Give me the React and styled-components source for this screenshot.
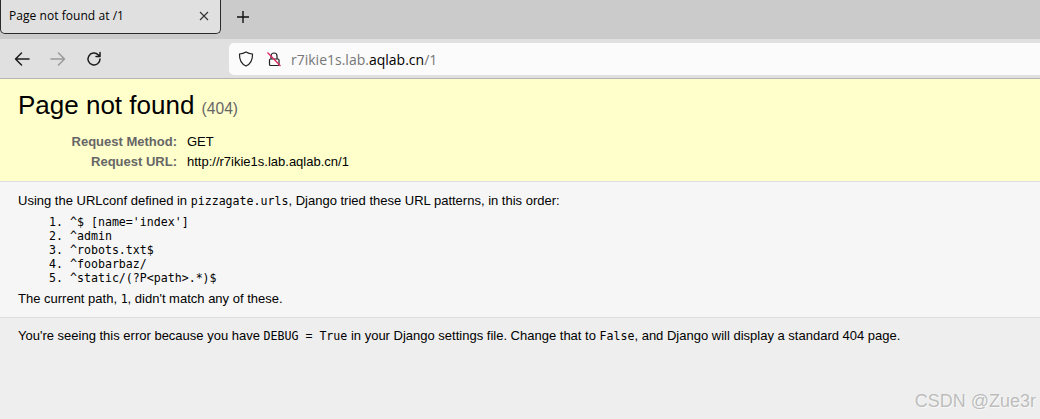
import React from 'react'
import styled, { createGlobalStyle } from 'styled-components'

const GlobalStyle = createGlobalStyle`
  html, body { margin: 0; padding: 0; height: 100%; overflow: hidden; }
  body { font-family: "Liberation Sans", Arial, sans-serif; color: #000; background: #eee; }
  #root { height: 100%; }
`

const Window = styled.div`
  position: relative;
  display: flex;
  flex-direction: column;
  width: 1040px;
  height: 419px;
  overflow: hidden;
`

const TabBar = styled.div`
  display: flex;
  align-items: flex-start;
  height: 39px;
  flex: none;
  background: #cbcbcb;
`

const Tab = styled.div`
  display: flex;
  align-items: center;
  justify-content: space-between;
  box-sizing: border-box;
  width: 221px;
  height: 34px;
  padding: 0 11px 2px 8px;
  background: #e0e0e0;
  border: 1px solid #2a2a2a;
  border-top: none;
  border-radius: 0 0 5px 5px;
  font-family: "Open Sans", sans-serif;
  font-size: 12px;
  letter-spacing: 0.05px;
`

const NewTab = styled.button`
  display: flex;
  align-items: center;
  justify-content: center;
  width: 20px;
  height: 34px;
  margin-left: 12px;
  padding: 0;
  border: none;
  background: none;
`

const Toolbar = styled.div`
  display: flex;
  align-items: center;
  height: 40px;
  flex: none;
  box-sizing: border-box;
  padding: 1px 0 0 14px;
  background: #e0e0e0;
  border-bottom: 1px solid #b4b4b4;
`

const NavButton = styled.span`
  display: flex;
  width: 16px;
  height: 16px;
  margin-right: 20px;
  color: ${(p) => (p.$disabled ? '#9a9a9a' : '#1c1c1c')};
`

const UrlBar = styled.div`
  display: flex;
  align-items: center;
  flex: 1;
  height: 32px;
  margin-left: 107px;
  padding-left: 9px;
  background: #fbfbfb;
  border-radius: 5px 0 0 5px;
  font-family: "Open Sans", sans-serif;
  font-size: 14px;
  color: #777;
`

const UrlIcon = styled.span`
  display: flex;
  width: 16px;
  height: 18px;
  margin-right: ${(p) => p.$gap}px;
`

const Host = styled.span`
  color: #000;
`

const Page = styled.main`
  flex: 1;
  display: flex;
  flex-direction: column;
  font-size: 13px;
  line-height: 14px;
`

const Summary = styled.section`
  box-sizing: border-box;
  height: 103px;
  padding: 9px 18px 0;
  background: #ffc;
  border-bottom: 1px solid #ddd;
`

const Title = styled.h1`
  margin: 0 0 9px;
  font-size: 26px;
  line-height: 35px;
  font-weight: 400;
`

const Status = styled.span`
  font-size: 15.6px;
  color: #666;
`

const Meta = styled.div`
  display: grid;
  grid-template-columns: 159px auto;
  column-gap: 10px;
  row-gap: 6px;
`

const MetaLabel = styled.div`
  text-align: right;
  font-weight: 700;
  color: #666;
`

const Info = styled.section`
  box-sizing: border-box;
  height: 136px;
  padding: 12px 18px 0;
  background: #f6f6f6;
  border-bottom: 1px solid #ddd;
`

const Para = styled.p`
  margin: 0;
`

const Mono = styled.code`
  font-family: "DejaVu Sans Mono", monospace;
  font-size: 11.6px;
`

const Patterns = styled.ol`
  margin: 7px 0 7px;
  padding: 0 0 0 52px;
  font-family: "DejaVu Sans Mono", monospace;
  font-size: 11.6px;
  line-height: 14px;
`

const Explanation = styled.section`
  flex: 1;
  padding: 11px 18px 0;
  background: #eee;
`

const Watermark = styled.div`
  position: absolute;
  right: 4px;
  bottom: 7px;
  font-size: 18px;
  line-height: 21px;
  color: rgba(120, 120, 120, 0.45);
  text-shadow: 1px 1px 1px rgba(255, 255, 255, 0.6);
`

const patterns = [
  "^$ [name='index']",
  '^admin',
  '^robots.txt$',
  '^foobarbaz/',
  '^static/(?P<path>.*)$',
]

const strokeProps = {
  fill: 'none',
  stroke: 'currentColor',
  strokeLinecap: 'round',
  strokeLinejoin: 'round',
}

export default function App() {
  return (
    <Window>
      <GlobalStyle />
      <TabBar>
        <Tab>
          <span>Page not found at /1</span>
          <svg width="10" height="10" viewBox="0 0 10 10" stroke="#333" strokeWidth="1.1">
            <path d="M1 1l8 8M9 1l-8 8" />
          </svg>
        </Tab>
        <NewTab aria-label="New tab">
          <svg width="14" height="14" viewBox="0 0 14 14" stroke="#111" strokeWidth="1.4">
            <path d="M7 1v12M1 7h12" />
          </svg>
        </NewTab>
      </TabBar>
      <Toolbar>
        <NavButton>
          <svg width="16" height="16" viewBox="0 0 16 16" {...strokeProps} strokeWidth="1.5">
            <path d="M15 8H1.500M7.500 2L1.500 8l6 6" />
          </svg>
        </NavButton>
        <NavButton $disabled>
          <svg width="16" height="16" viewBox="0 0 16 16" {...strokeProps} strokeWidth="1.5">
            <path d="M1 8h13.500M8.500 2l6 6-6 6" />
          </svg>
        </NavButton>
        <NavButton>
          <svg width="16" height="16" viewBox="0 0 16 16" {...strokeProps} strokeWidth="1.5">
            <path d="M14 8a6 6 0 1 1-1.800-4.300L14 5.500M14 1.500v4h-4" />
          </svg>
        </NavButton>
        <UrlBar>
          <UrlIcon $gap={12}>
            <svg width="16" height="18" viewBox="0 0 16 18" fill="none" stroke="#222" strokeWidth="1.2">
              <path d="M8 2c2 1.200 4 1.800 6.500 2 .2 5.500-1.500 9.800-6.500 12C3 13.800 1.300 9.500 1.500 4 4 3.800 6 3.200 8 2z" />
            </svg>
          </UrlIcon>
          <UrlIcon $gap={9}>
            <svg width="16" height="18" viewBox="0 0 16 18" fill="none" strokeWidth="1.2">
              <path d="M5 9V6a3 3 0 0 1 6 0v3M4.500 9h7.500a1 1 0 0 1 1 1v4.500a1 1 0 0 1-1 1H4.500a1 1 0 0 1-1-1V10a1 1 0 0 1 1-1z" stroke="#222" strokeLinejoin="round" />
              <path d="M1.500 2.500L14.500 16" stroke="#e0245e" />
            </svg>
          </UrlIcon>
          <span>r7ikie1s.lab.<Host>aqlab.cn</Host>/1</span>
        </UrlBar>
      </Toolbar>
      <Page>
        <Summary>
          <Title>
            Page not found <Status>(404)</Status>
          </Title>
          <Meta>
            <MetaLabel>Request Method:</MetaLabel>
            <div>GET</div>
            <MetaLabel>Request URL:</MetaLabel>
            <div>http://r7ikie1s.lab.aqlab.cn/1</div>
          </Meta>
        </Summary>
        <Info>
          <Para>
            Using the URLconf defined in <Mono>pizzagate.urls</Mono>, Django tried these URL patterns, in this order:
          </Para>
          <Patterns>
            {patterns.map((pattern) => (
              <li key={pattern}>{pattern}</li>
            ))}
          </Patterns>
          <Para>
            The current path, <Mono>1</Mono>, didn't match any of these.
          </Para>
        </Info>
        <Explanation>
          <Para>
            You're seeing this error because you have <Mono>DEBUG = True</Mono> in your Django settings file. Change that to <Mono>False</Mono>, and Django will display a standard 404 page.
          </Para>
        </Explanation>
      </Page>
      <Watermark>CSDN @Zue3r</Watermark>
    </Window>
  )
}
